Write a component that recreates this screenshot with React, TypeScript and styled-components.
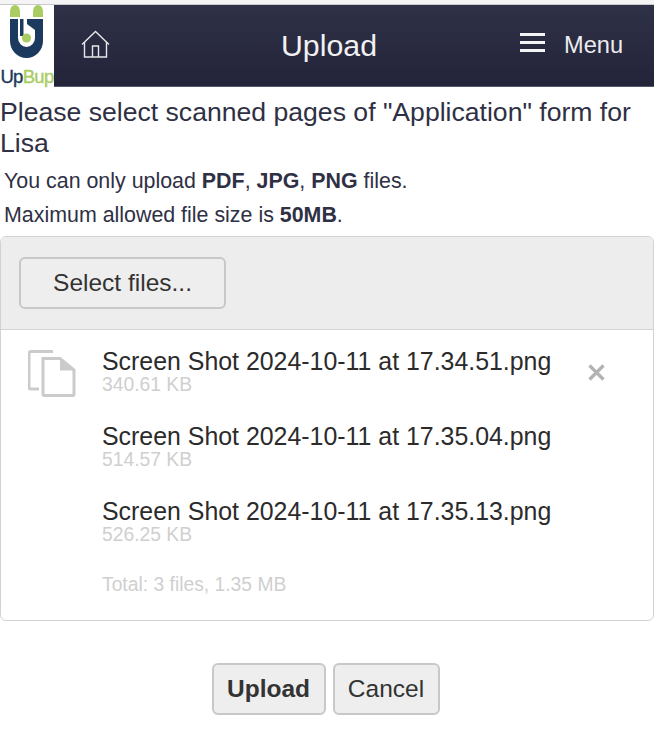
import * as React from "react"
import styled, { createGlobalStyle } from "styled-components"

const GlobalStyle = createGlobalStyle`
  html, body {
    margin: 0;
    padding: 0;
    background: #fff;
  }
  body {
    font-family: "Liberation Sans", Arial, sans-serif;
    color: #333;
  }
`

const Page = styled.div`
  width: 654px;
  height: 742px;
  overflow: hidden;
`

const TopStrip = styled.div`
  height: 5px;
  background: #f4f4f4;
  border-bottom: 1px solid #c9c9cc;
  box-sizing: border-box;
`

const Header = styled.header`
  display: flex;
  height: 82px;
`

const LogoBox = styled.div`
  width: 54px;
  flex: none;
  display: flex;
  flex-direction: column;
  align-items: center;
  background: #fff;
`

const LogoText = styled.span`
  font-size: 18.5px;
  line-height: 21px;
  font-weight: 400;
  letter-spacing: -0.7px;
  -webkit-text-stroke: 0.4px currentColor;
  color: #1c3a5e;
  white-space: nowrap;

  b {
    font-weight: 400;
    color: #a9cd62;
  }
`

const Bar = styled.div`
  flex: 1;
  display: grid;
  grid-template-columns: 60px 1fr 134px;
  align-items: center;
  background: linear-gradient(#2f3146, #23243a);
  border-bottom: 1px solid #55566a;
  box-sizing: border-box;
  color: #fff;
`

const HomeLink = styled.a`
  display: flex;
  padding-left: 27px;
  margin-top: -3px;
`

const Title = styled.h1`
  margin: 0;
  font-size: 30.3px;
  font-weight: 400;
  text-align: center;
  color: #f1f1f3;
  padding-left: 24px;
`

const MenuButton = styled.div`
  display: flex;
  align-items: center;
  gap: 19px;
  font-size: 23.6px;
  color: #ececef;

  svg {
    margin-top: -6px;
  }
`

const Heading = styled.h2`
  margin: 0;
  padding-top: 10px;
  font-size: 26.6px;
  line-height: 31px;
  font-weight: 400;
  color: #2f3044;
`

const Note = styled.p<{ $top: number }>`
  margin: ${(p) => p.$top}px 0 0 4px;
  font-size: 21.4px;
  line-height: 24px;
  color: #2f3044;
`

const UploadPanel = styled.section`
  margin-top: 9px;
  border: 1px solid #d2d2d4;
  border-radius: 6px;
  height: 385px;
  box-sizing: border-box;
  display: flex;
  flex-direction: column;
`

const Toolbar = styled.div`
  background: #ededee;
  border-bottom: 1px solid #d5d5d7;
  border-radius: 5px 5px 0 0;
  height: 93px;
  flex: none;
  box-sizing: border-box;
  padding: 20px 18px;
`

const Button = styled.button<{ $primary?: boolean }>`
  font-family: inherit;
  font-size: 24.5px;
  font-weight: ${(p) => (p.$primary ? 700 : 400)};
  color: #333;
  background: #eeeeee;
  border: 2px solid #c8c8c8;
  border-radius: 6px;
  height: 52px;
  padding: 0;
  box-sizing: border-box;
`

const SelectButton = styled(Button)`
  width: 207px;
`

const FileArea = styled.div`
  display: grid;
  grid-template-columns: 101px 486px 1fr;
  padding-top: 17px;
`

const IconCell = styled.div`
  padding: 3px 0 0 27px;
`

const FileList = styled.ul`
  list-style: none;
  margin: 0;
  padding: 0;
`

const FileItem = styled.li`
  height: 75px;
`

const FileName = styled.div`
  font-size: 24.9px;
  line-height: 28px;
  color: #2b2b2b;
`

const FileSize = styled.div`
  font-size: 19.3px;
  line-height: 18px;
  margin-top: 1px;
  color: #cfcfcf;
`

const Total = styled.div`
  font-size: 19.3px;
  line-height: 22px;
  color: #cfcfcf;
  margin-top: 2px;
`

const RemoveCell = styled.div`
  padding-top: 17px;
`

const Actions = styled.div`
  display: flex;
  justify-content: center;
  gap: 7px;
  margin-top: 42px;
  padding-right: 3px;
`

const UploadButton = styled(Button)`
  width: 114px;
`

const CancelButton = styled(Button)`
  width: 107px;
`

const HomeIcon = () => (
  <svg width="30" height="28" viewBox="0 0 30 28" fill="none" stroke="#e6e6ea" strokeWidth="1.4">
    <path d="M1 14.5 L14.5 1.5 L28 14.5" />
    <path d="M3.5 12 V27 H25.5 V12" />
    <path d="M11.5 27 V16 H17.5 V27" />
  </svg>
)

const MenuIcon = () => (
  <svg width="25" height="20" viewBox="0 0 25 20" fill="#f4f4f6">
    <rect y="0" width="25" height="3" />
    <rect y="8" width="25" height="3" />
    <rect y="16" width="25" height="3" />
  </svg>
)

const LogoMark = () => (
  <svg width="54" height="61" viewBox="0 5 54 61" style={{ flex: "none" }}>
    <path d="M10 13 q0 -8 5 -8 q5 0 5 8 v4 h-10 z" fill="#a9cd62" />
    <path d="M33 13 q0 -8 5 -8 q5 0 5 8 v4 h-10 z" fill="#a9cd62" />
    <path d="M10 19 H18 V38 a8.5 9 0 0 0 17 0 V19 H43 V41 a16.5 17 0 0 1 -33 0 Z" fill="#1c3a5e" />
    <path d="M20 19 H23.5 V36 H20 Z" fill="#1c3a5e" />
    <path d="M27 19 H35 V30 L27 24 Z" fill="#1c3a5e" />
    <circle cx="26.5" cy="38" r="4.6" fill="#a9cd62" />
  </svg>
)

const FilesIcon = () => (
  <svg width="48" height="47" viewBox="0 0 48 47" fill="none">
    <path d="M11 39 H3 a2 2 0 0 1 -2 -2 V3.5 a2 2 0 0 1 2 -2 H25" stroke="#cbcbcb" strokeWidth="3" />
    <path d="M15 8.5 H32 L46 20 V44 a1.5 1.5 0 0 1 -1.5 1.5 H16.5 a1.5 1.5 0 0 1 -1.5 -1.5 Z" stroke="#cbcbcb" strokeWidth="3" />
    <path d="M32 7 L47 20.5 H32 Z" fill="#cbcbcb" />
  </svg>
)

const RemoveIcon = () => (
  <svg width="17" height="17" viewBox="0 0 17 17" stroke="#b3b3b3" strokeWidth="3.2">
    <path d="M1.5 1.5 L15.5 15.5 M15.5 1.5 L1.5 15.5" />
  </svg>
)

const files = [
  { name: "Screen Shot 2024-10-11 at 17.34.51.png", size: "340.61 KB" },
  { name: "Screen Shot 2024-10-11 at 17.35.04.png", size: "514.57 KB" },
  { name: "Screen Shot 2024-10-11 at 17.35.13.png", size: "526.25 KB" },
]

const App = () => (
  <Page>
    <GlobalStyle />
    <TopStrip />
    <Header>
      <LogoBox>
        <LogoMark />
        <LogoText>
          Up<b>Bup</b>
        </LogoText>
      </LogoBox>
      <Bar>
        <HomeLink>
          <HomeIcon />
        </HomeLink>
        <Title>Upload</Title>
        <MenuButton>
          <MenuIcon />
          Menu
        </MenuButton>
      </Bar>
    </Header>
    <Heading>Please select scanned pages of "Application" form for Lisa</Heading>
    <Note $top={10}>
      You can only upload <b>PDF</b>, <b>JPG</b>, <b>PNG</b> files.
    </Note>
    <Note $top={10}>
      Maximum allowed file size is <b>50MB</b>.
    </Note>
    <UploadPanel>
      <Toolbar>
        <SelectButton>Select files...</SelectButton>
      </Toolbar>
      <FileArea>
        <IconCell>
          <FilesIcon />
        </IconCell>
        <FileList>
          {files.map((f) => (
            <FileItem key={f.name}>
              <FileName>{f.name}</FileName>
              <FileSize>{f.size}</FileSize>
            </FileItem>
          ))}
          <Total>Total: 3 files, 1.35 MB</Total>
        </FileList>
        <RemoveCell>
          <RemoveIcon />
        </RemoveCell>
      </FileArea>
    </UploadPanel>
    <Actions>
      <UploadButton $primary>Upload</UploadButton>
      <CancelButton>Cancel</CancelButton>
    </Actions>
  </Page>
)

export default App
